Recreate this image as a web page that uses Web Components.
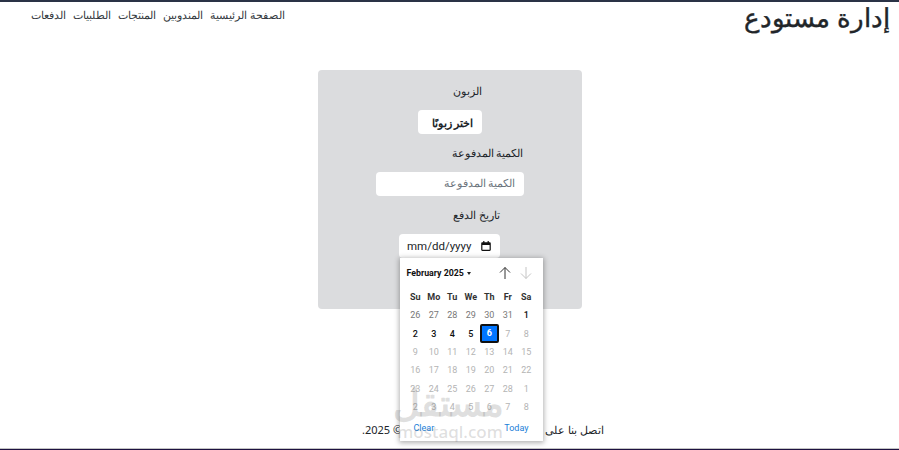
<!DOCTYPE html>
<html lang="ar" dir="rtl"><head><meta charset="utf-8">
<style>
html,body{margin:0;padding:0;height:450px;overflow:hidden;background:#fff}
body{font-family:"Noto Sans","Inter",sans-serif;color:#212529}
</style></head><body>
<app-shell>
  <site-header slot="header" title="إدارة مستودع">
    <a>الصفحة الرئيسية</a><a>المندوبين</a><a>المنتجات</a><a>الطلبيات</a><a>الدفعات</a>
  </site-header>
  <payment-form slot="main"></payment-form>
  <site-footer slot="footer"></site-footer>
  <water-mark></water-mark>
</app-shell>
<script>
function def(name,html){customElements.define(name,class extends HTMLElement{constructor(){super();this.attachShadow({mode:'open'}).innerHTML=html;}});}
def('app-shell',`<style>:host{display:flex;flex-direction:column;height:450px;box-sizing:border-box;border-top:2px solid #2a3346;border-bottom:1px solid #1d1140;position:relative}
main{flex:1;display:flex;justify-content:center;align-items:flex-start;padding-top:30px;position:relative;z-index:2}
.line{height:1px;background:#c4c4c4}</style>
<slot name="header"></slot><main><slot name="main"></slot></main><slot name="footer"></slot><div class="line"></div><slot></slot>`);
customElements.define('site-header',class extends HTMLElement{constructor(){super();this.attachShadow({mode:'open'}).innerHTML=`<style>:host{display:flex;justify-content:space-between;align-items:flex-start;height:38px;padding:0 9px 0 0}
h1{margin:0;font-size:26.3px;line-height:30px;font-weight:500;-webkit-text-stroke:.4px #212529;color:#212529}
nav{display:flex;gap:7px;font-size:10.7px;line-height:26px;color:#343a40;padding-left:31px}
::slotted(a){color:#343a40}</style><h1>${this.getAttribute('title')}</h1><nav><slot></slot></nav>`;}});
def('form-label',`<style>:host{display:block;font-size:10.5px;line-height:18px;height:18px;color:#212529;text-align:right}</style><slot></slot>`);
def('select-box',`<style>:host{display:flex;align-items:center;justify-content:flex-start;width:64px;height:24px;background:#fff;border-radius:4px;font-size:11px;font-weight:600;color:#212529;padding-right:8px;box-sizing:border-box}</style><slot></slot>`);
def('text-box',`<style>:host{display:flex;align-items:center;width:148px;height:24px;background:#fff;border-radius:4px;font-size:10.5px;line-height:22px;color:#6c757d;padding:0 8px 2px 0;box-sizing:border-box}</style><slot></slot>`);
def('date-box',`<style>:host{display:flex;direction:ltr;align-items:center;justify-content:space-between;width:101px;height:24px;background:#fff;border-radius:4px;font:11.5px "Roboto","Liberation Sans",sans-serif;color:#212529;padding:0 8px 1px;box-sizing:border-box}
svg{width:12px;height:12px}</style><span>mm/dd/yyyy</span><svg viewBox="0 0 12 12"><path d="M3.2 1v1.2H2.4c-.7 0-1.2.5-1.2 1.2v6.4c0 .7.5 1.2 1.2 1.2h7.2c.7 0 1.2-.5 1.2-1.2V3.4c0-.7-.5-1.2-1.2-1.2h-.8V1H7.6v1.2H4.4V1zM2.4 5h7.2v4.8H2.4z" fill="#111"/></svg>`);
def('date-picker',`<style>
:host{position:absolute;left:82px;top:188px;width:143px;height:183px;background:#fff;box-shadow:0 1px 5px 1px rgba(0,0,0,.3);direction:ltr;font:9px "Roboto","Liberation Sans",sans-serif;display:flex;flex-direction:column}
.top{display:flex;align-items:center;justify-content:space-between;padding:4px 11px 0 7px;height:22px;box-sizing:content-box}
.m{font-weight:700;font-size:8.8px;color:#111;display:flex;align-items:center;gap:3px}
.m i{border:2.5px solid transparent;border-top:3px solid #222;border-bottom:0;display:block}
.arrows{display:flex;gap:9px}
.grid{display:grid;grid-template-columns:repeat(7,18.5px);grid-auto-rows:18.45px;padding:0 6.5px;margin-top:3.5px;justify-items:center;align-items:center;text-align:center;font-size:9px}
.h{font-weight:700;color:#333}.a{color:#777}.b{color:#111;font-weight:500}.c{color:#b4b4b4}
.s{background:#0075ff;color:#fff;font-weight:700;border:2px solid #101010;border-radius:2px;width:15px;height:15px;line-height:15px}
.foot{display:flex;justify-content:space-between;padding:0 14px;color:#1a80d8;font-size:9px;margin-top:6.5px}
</style>
<div class="top"><span class="m">February 2025 <i></i></span><span class="arrows">
<svg width="12" height="14" viewBox="0 0 12 14"><path d="M6 13V1.5M1 6.5l5-5 5 5" fill="none" stroke="#333" stroke-width="1"/></svg>
<svg width="12" height="14" viewBox="0 0 12 14"><path d="M6 1v11.5M1 7.5l5 5 5-5" fill="none" stroke="#c4c4c4" stroke-width="1"/></svg></span></div>
<div class="grid" id="g"></div>
<div class="foot"><span>Clear</span><span>Today</span></div>`);
customElements.define('payment-form',class extends HTMLElement{constructor(){super();this.attachShadow({mode:'open'}).innerHTML=`<style>
:host{display:block;position:relative;width:264px;height:239px;background:#dbdcde;border-radius:4px;box-sizing:border-box}
.col{display:flex;flex-direction:column;align-items:center;padding-top:12px}
.r{display:flex;flex-direction:column;gap:10px;margin-bottom:10px;align-items:center}
</style><div class="col">
<div class="r"><form-label style="width:64px">الزبون</form-label><select-box>اختر زبونًا</select-box></div>
<div class="r"><form-label style="width:148px">الكمية المدفوعة</form-label><text-box>الكمية المدفوعة</text-box></div>
<div class="r"><form-label style="width:101px">تاريخ الدفع</form-label><date-box></date-box></div>
</div><date-picker></date-picker>`;
const g=this.shadowRoot.querySelector('date-picker').shadowRoot.getElementById('g');
let h='';['Su','Mo','Tu','We','Th','Fr','Sa'].forEach(d=>h+=`<span class="h">${d}</span>`);
[26,27,28,29,30,31].forEach(d=>h+=`<span class="a">${d}</span>`);h+='<span class="b">1</span>';
[2,3,4,5].forEach(d=>h+=`<span class="b">${d}</span>`);h+='<span class="s">6</span>';
[7,8,9,10,11,12,13,14,15,16,17,18,19,20,21,22,23,24,25,26,27,28,1,2,3,4,5,6,7,8].forEach(d=>h+=`<span class="c">${d}</span>`);
g.innerHTML=h;}});
def('site-footer',`<style>:host{display:block;text-align:right;white-space:nowrap;font-size:11px;line-height:18px;color:#212529;height:27px;padding-right:295px}</style>اتصل بنا على واتساب أو عبر البريد الإلكتروني © 2025.`);
def('water-mark',`<style>:host{position:absolute;left:396px;top:378px;width:108px;z-index:3;direction:rtl;text-align:center;pointer-events:none;color:rgba(110,110,110,.22);font-family:"Noto Sans",sans-serif;font-weight:700}
.a{font-size:37px;line-height:44px}.b{direction:ltr;font-size:17px;line-height:18px;font-weight:500;margin-top:-1px;white-space:nowrap}</style><div class="a">مستقل</div><div class="b">mostaql.com</div>`);
</script></body></html>
